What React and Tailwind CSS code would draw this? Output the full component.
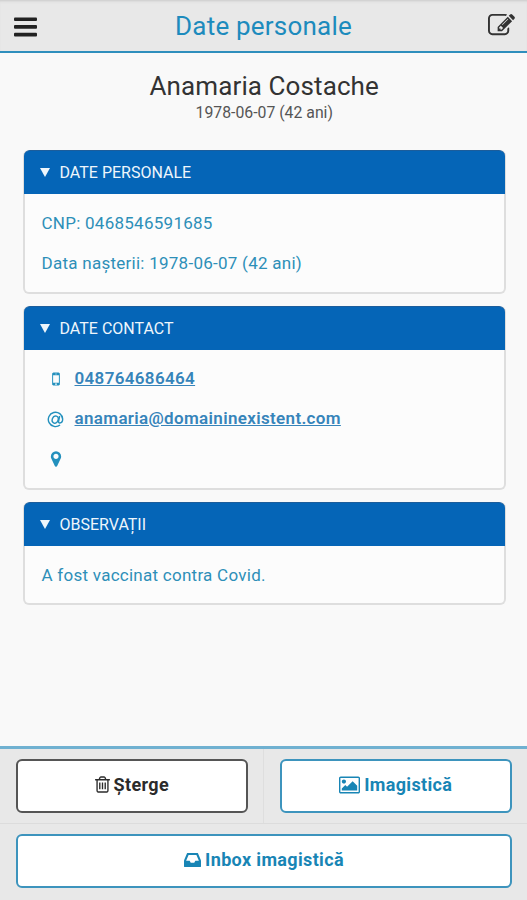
const icons = {
  edit: "M888 1184l116-116-152-152-116 116v56h96v96h56zm440-720q-16-16-33 1l-350 350q-17 17-1 33t33-1l350-350q17-17 1-33zm80 594v190q0 119-84.5 203.5t-203.5 84.5h-832q-119 0-203.5-84.5t-84.5-203.5v-832q0-119 84.5-203.5t203.5-84.5h832q63 0 117 25 15 7 18 23 3 17-9 29l-49 49q-14 14-32 8-23-6-45-6h-832q-66 0-113 47t-47 113v832q0 66 47 113t113 47h832q66 0 113-47t47-113v-126q0-13 9-22l64-64q15-15 35-7t20 29zm-96-738l288 288-672 672h-288v-288zm444 132l-92 92-288-288 92-92q28-28 68-28t68 28l152 152q28 28 28 68t-28 68z",
  mobile: "M976 1408q0-33-23.5-56.5t-56.5-23.5-56.5 23.5-23.5 56.5 23.5 56.5 56.5 23.5 56.5-23.5 23.5-56.5zm208-160v-704q0-13-9.5-22.5t-22.5-9.5h-512q-13 0-22.5 9.5t-9.5 22.5v704q0 13 9.5 22.5t22.5 9.5h512q13 0 22.5-9.5t9.5-22.5zm-192-848q0-16-16-16h-160q-16 0-16 16t16 16h160q16 0 16-16zm288-16v1024q0 52-38 90t-90 38h-512q-52 0-90-38t-38-90v-1024q0-52 38-90t90-38h512q52 0 90 38t38 90z",
  marker: "M1152 640q0-106-75-181t-181-75-181 75-75 181 75 181 181 75 181-75 75-181zm256 0q0 109-33 179l-364 774q-16 33-47.5 52t-67.5 19-67.5-19-46.5-52l-365-774q-33-70-33-179 0-212 150-362t362-150 362 150 150 362z",
  trash: "M704 736v576q0 14-9 23t-23 9h-64q-14 0-23-9t-9-23v-576q0-14 9-23t23-9h64q14 0 23 9t9 23zm256 0v576q0 14-9 23t-23 9h-64q-14 0-23-9t-9-23v-576q0-14 9-23t23-9h64q14 0 23 9t9 23zm256 0v576q0 14-9 23t-23 9h-64q-14 0-23-9t-9-23v-576q0-14 9-23t23-9h64q14 0 23 9t9 23zm128 724v-948h-896v948q0 22 7 40.5t14.5 27 10.5 8.5h832q3 0 10.5-8.5t14.5-27 7-40.5zm-672-1076h448l-48-117q-7-9-17-11h-317q-10 2-17 11zm928 32v64q0 14-9 23t-23 9h-96v948q0 83-47 143.5t-113 60.5h-832q-66 0-113-58.5t-47-141.5v-952h-96q-14 0-23-9t-9-23v-64q0-14 9-23t23-9h309l70-167q15-37 54-63t79-26h320q40 0 79 26t54 63l70 167h309q14 0 23 9t9 23z",
  picture: "M576 576q0 80-56 136t-136 56-136-56-56-136 56-136 136-56 136 56 56 136zm1024 384v448h-1408v-192l320-320 160 160 512-512zm96-704h-1600q-13 0-22.5 9.5t-9.5 22.5v1216q0 13 9.5 22.5t22.5 9.5h1600q13 0 22.5-9.5t9.5-22.5v-1216q0-13-9.5-22.5t-22.5-9.5zm160 32v1216q0 66-47 113t-113 47h-1600q-66 0-113-47t-47-113v-1216q0-66 47-113t113-47h1600q66 0 113 47t47 113z",
  inbox: "M1023 960h316q-1-3-2.5-8t-2.5-8l-212-496h-708l-212 496q-1 2-2.5 8t-2.5 8h316l95 192h320zm513 30v482q0 26-19 45t-45 19h-1408q-26 0-45-19t-19-45v-482q0-62 25-123l238-552q10-25 36.5-42t52.5-17h832q26 0 52.5 17t36.5 42l238 552q25 61 25 123z",
};

function Icon({ name, viewBox = "0 0 1792 1792", className }) {
  return (
    <svg viewBox={viewBox} fill="currentColor" className={className}>
      <path d={icons[name]} />
    </svg>
  );
}

function BarsIcon() {
  return (
    <svg viewBox="0 0 23 20" fill="currentColor" className="h-[20px] w-[23px]">
      <rect y="0.4" width="23" height="3.7" rx="1" />
      <rect y="8.1" width="23" height="3.7" rx="1" />
      <rect y="15.8" width="23" height="3.7" rx="1" />
    </svg>
  );
}

function AtIcon() {
  return (
    <svg
      viewBox="0 0 18 18"
      fill="none"
      stroke="currentColor"
      strokeWidth="1.5"
      className="h-[17px] w-[17px]"
    >
      <path d="M13.8 14.8A7.6 7.6 0 1 1 16.6 8.6c0 2.6-1.5 4.1-3 4.1-1.2 0-1.6-.8-1.3-2.1l1.1-5.3" />
      <ellipse cx="8.7" cy="9.1" rx="3.1" ry="3.9" transform="rotate(20 8.7 9.1)" />
    </svg>
  );
}

function Panel({ title, className, children }) {
  return (
    <section
      className={`rounded-md border-2 border-t-0 border-[#dedede] bg-[#fcfcfc] ${className}`}
    >
      <h2 className="-mx-px flex h-11 items-center rounded-t-md border-t border-[#1c5d9b] bg-[#0565b7] pl-[16px] text-base text-[#eef6fc]">
        <svg viewBox="0 0 10 9" fill="currentColor" className="mr-[10px] h-[9px] w-[10px]">
          <path d="M0 0h10L5 9z" />
        </svg>
        {title}
      </h2>
      {children}
    </section>
  );
}

function ContactRow({ icon, children }) {
  return (
    <li className="flex h-10 items-center">
      <span className="mr-[10px] flex w-[18px] justify-center text-[#2390bd]">{icon}</span>
      {children}
    </li>
  );
}

export default function App() {
  return (
    <div className="flex h-[900px] w-[527px] flex-col bg-[#f9f9f9] font-['Roboto',sans-serif] text-[#2d8fb8]">
      <header className="flex h-[53px] shrink-0 items-center justify-between border-b-2 border-[#2f8fbd] bg-[#e8e8e8] pr-[12px] pl-[14px] shadow-[inset_0_3px_3px_-2px_#c8c8c8]">
        <button className="pt-[2px] text-[#222]">
          <BarsIcon />
        </button>
        <h1 className="pt-px pl-[2px] text-[26px] leading-none tracking-[0.2px] text-[#1d8bbd]">Date personale</h1>
        <button className="text-[#333]">
          <Icon name="edit" className="h-[27px] w-[27px]" />
        </button>
      </header>

      <main className="flex-1 pr-[21px] pl-[22.5px]">
        <div className="pt-[17px] text-center text-[#333]">
          <p className="text-[26px] leading-[32px] tracking-[0.1px]">Anamaria Costache</p>
          <p className="text-[15.8px] leading-[21px] text-[#555]">1978-06-07 (42 ani)</p>
        </div>

        <Panel title="DATE PERSONALE" className="mt-[27px] h-[144px]">
          <div className="px-[17px] pt-[9px] text-[17px] leading-10 tracking-[0.26px]">
            <p>CNP: 0468546591685</p>
            <p>Data nașterii: 1978-06-07 (42 ani)</p>
          </div>
        </Panel>

        <Panel title="DATE CONTACT" className="mt-[12px] h-[184px]">
          <ul className="pt-[9px] pl-[22px] text-[17px] font-semibold tracking-[0.34px] text-[#3684ba]">
            <ContactRow icon={<Icon name="mobile" className="h-[18px] w-[18px]" />}>
              <a href="#tel" className="underline">048764686464</a>
            </ContactRow>
            <ContactRow icon={<AtIcon />}>
              <a href="#mail" className="underline">anamaria@domaininexistent.com</a>
            </ContactRow>
            <ContactRow icon={<Icon name="marker" className="h-[18px] w-[18px]" />} />
          </ul>
        </Panel>

        <Panel title="OBSERVAȚII" className="mt-[12px] h-[103px]">
          <p className="px-[17px] pt-[9px] text-[17px] leading-10 tracking-[0.26px]">A fost vaccinat contra Covid.</p>
        </Panel>
      </main>

      <footer className="shrink-0 border-t-[3px] border-[#70b1d1] bg-[#e8e8e8] text-[18px] font-bold tracking-[0.35px]">
        <div className="grid h-[75px] grid-cols-2 border-b border-[#dcdcdc]">
          <div className="border-r border-[#dedede] pt-[10px] pr-[15px] pl-[16px]">
            <button className="flex h-[54px] w-full items-center justify-center gap-[4px] rounded-md border-2 border-[#555] bg-white pb-[3px] text-[#2b2b2b]">
              <Icon name="trash" viewBox="192 0 1408 1792" className="h-[19px] w-[15px]" />
              Șterge
            </button>
          </div>
          <div className="pt-[10px] pr-[15px] pl-[16px]">
            <button className="flex h-[54px] w-full items-center justify-center gap-[4px] rounded-md border-2 border-[#3d94bd] bg-white pb-[3px] text-[#1885b5]">
              <Icon name="picture" viewBox="-64 0 1920 1792" className="h-[20px] w-[21px]" />
              Imagistică
            </button>
          </div>
        </div>
        <div className="h-[76px] pt-[10px] pr-[15px] pl-[16px]">
          <button className="flex h-[54px] w-full items-center justify-center gap-[4px] rounded-md border-2 border-[#3d94bd] bg-white pb-[3px] text-[#1885b5]">
            <Icon name="inbox" viewBox="0 0 1536 1792" className="h-[20px] w-[17px]" />
            Inbox imagistică
          </button>
        </div>
      </footer>
    </div>
  );
}
